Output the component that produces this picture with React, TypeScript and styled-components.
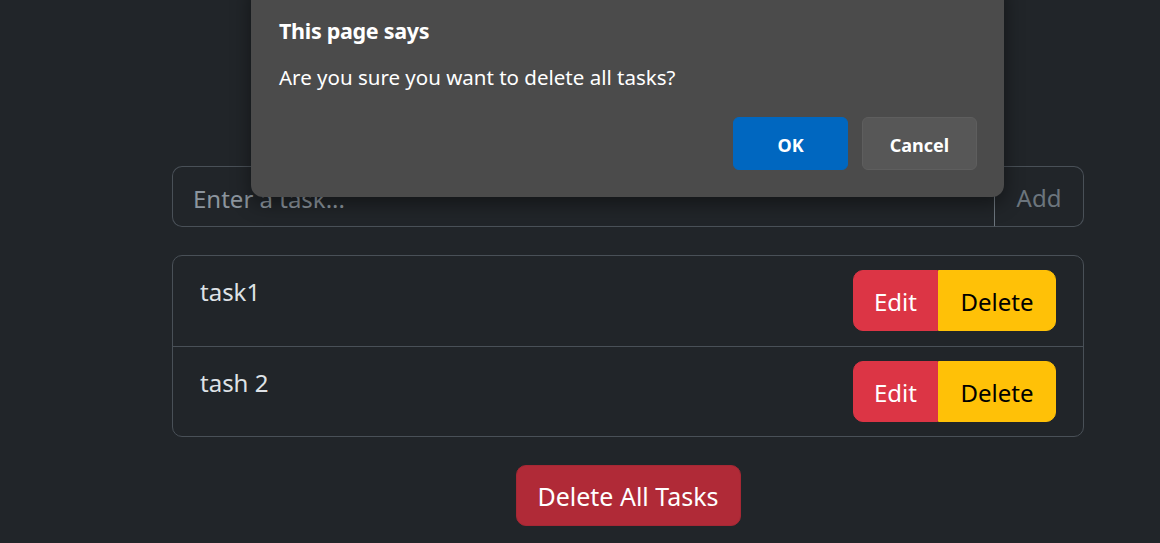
import React from "react";
import styled, { createGlobalStyle } from "styled-components";

const Global = createGlobalStyle`
  html, body { margin: 0; padding: 0; background: #212529; overflow: hidden; }
  body { font-family: "Noto Sans", "Open Sans", sans-serif; color: #dee2e6; }
  * { box-sizing: border-box; }
`;

const Viewport = styled.div`
  position: relative;
  width: 100%;
  height: 543px;
  overflow: hidden;
`;

const Container = styled.main`
  width: 912px;
  margin-left: 172px;
  padding-top: 166px;
  display: flex;
  flex-direction: column;
  align-items: stretch;
`;

const InputGroup = styled.div`
  display: flex;
  height: 61px;
  margin-bottom: 28px;
`;

const TaskInput = styled.input`
  flex: 1;
  min-width: 0;
  background: #212529;
  border: 1px solid #495057;
  border-right: none;
  border-radius: 10px 0 0 10px;
  padding: 4px 20px 0;
  font-family: inherit;
  font-size: 24px;
  color: #dee2e6;
  outline: none;
  &::placeholder { color: #8c959e; }
`;

const AddButton = styled.button`
  width: 90px;
  background: transparent;
  border: 1px solid #495057;
  border-left: 1px solid #6c757d;
  border-radius: 0 10px 10px 0;
  padding-top: 3px;
  font-family: inherit;
  font-size: 24px;
  color: #6c757d;
`;

const List = styled.ul`
  list-style: none;
  margin: 0 0 28px;
  padding: 0;
  border: 1px solid #495057;
  border-radius: 10px;
`;

const Item = styled.li`
  display: flex;
  justify-content: space-between;
  align-items: flex-start;
  height: 90px;
  padding: 14px 27px;
  & + & { border-top: 1px solid #495057; }
`;

const TaskText = styled.span`
  font-size: 24px;
  line-height: 37px;
  padding-top: 3px;
  color: #dee2e6;
`;

const BtnGroup = styled.div`
  display: flex;
  height: 61px;
`;

const GroupButton = styled.button<{ $variant: "edit" | "delete" }>`
  border: 1px solid ${(p) => (p.$variant === "edit" ? "#dc3545" : "#ffc107")};
  background: ${(p) => (p.$variant === "edit" ? "#dc3545" : "#ffc107")};
  color: ${(p) => (p.$variant === "edit" ? "#fff" : "#000")};
  font-family: inherit;
  font-size: 24px;
  padding: 2px 0 0;
  width: ${(p) => (p.$variant === "edit" ? "85px" : "118px")};
  border-radius: ${(p) => (p.$variant === "edit" ? "10px 0 0 10px" : "0 10px 10px 0")};
`;

const Footer = styled.div`
  display: flex;
  justify-content: center;
`;

const DeleteAll = styled.button`
  width: 225px;
  height: 61px;
  background: #b02a37;
  border: 1px solid #a52834;
  border-radius: 10px;
  color: #fff;
  font-family: inherit;
  font-size: 25px;
  padding: 0;
`;

const Dialog = styled.div`
  position: absolute;
  left: 251px;
  top: -20px;
  width: 753px;
  height: 217px;
  background: #4b4b4b;
  border-radius: 12px;
  box-shadow: 0 6px 20px rgba(0, 0, 0, 0.45);
  padding: 36px 27px 27px 28px;
  display: flex;
  flex-direction: column;
  font-family: "Noto Sans", "Open Sans", sans-serif;
  color: #fff;
`;

const DialogTitle = styled.div`
  font-size: 21.5px;
  font-weight: 700;
  line-height: 30px;
  letter-spacing: -0.3px;
  margin-bottom: 16px;
`;

const DialogMessage = styled.div`
  font-size: 20.5px;
  line-height: 30px;
  flex: 1;
`;

const DialogActions = styled.div`
  display: flex;
  justify-content: flex-end;
  gap: 14px;
`;

const DialogButton = styled.button<{ $primary?: boolean }>`
  width: 115px;
  height: 53px;
  border-radius: 6px;
  border: 1px solid ${(p) => (p.$primary ? "#0067c0" : "#5e5e5e")};
  background: ${(p) => (p.$primary ? "#0067c0" : "#575757")};
  color: #fff;
  font-family: inherit;
  font-weight: 700;
  font-size: 18px;
  padding: 2px 0 0;
`;

const tasks = ["task1", "tash 2"];

export default function App() {
  return (
    <>
      <Global />
      <Viewport>
        <Container>
          <InputGroup>
            <TaskInput placeholder="Enter a task..." />
            <AddButton>Add</AddButton>
          </InputGroup>
          <List>
            {tasks.map((t) => (
              <Item key={t}>
                <TaskText>{t}</TaskText>
                <BtnGroup>
                  <GroupButton $variant="edit">Edit</GroupButton>
                  <GroupButton $variant="delete">Delete</GroupButton>
                </BtnGroup>
              </Item>
            ))}
          </List>
          <Footer>
            <DeleteAll>Delete All Tasks</DeleteAll>
          </Footer>
        </Container>
        <Dialog role="alertdialog">
          <DialogTitle>This page says</DialogTitle>
          <DialogMessage>Are you sure you want to delete all tasks?</DialogMessage>
          <DialogActions>
            <DialogButton $primary>OK</DialogButton>
            <DialogButton>Cancel</DialogButton>
          </DialogActions>
        </Dialog>
      </Viewport>
    </>
  );
}
